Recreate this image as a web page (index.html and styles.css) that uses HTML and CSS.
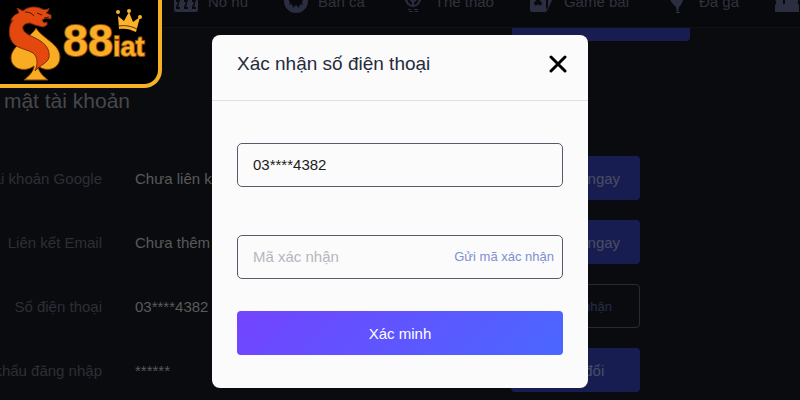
FILE: index.html
```html
<!DOCTYPE html>
<html lang="vi">
<head>
  <meta charset="UTF-8" />
  <meta name="viewport" content="width=device-width, initial-scale=1.0"/>
  <title>Xác nhận số điện thoại</title>
  <link rel="stylesheet" href="styles.css">
</head>
<body>
  <div class="page">
    <nav class="nav">
      <a class="nav-item" href="#">
        <svg class="nav-icon" viewBox="0 0 24 24"><path fill-rule="evenodd" d="M0 0h24v21a2 2 0 0 1-2 2H2a2 2 0 0 1-2-2zM2 11h4l-2 7h2v2H2v-2l2-5H2zM10 11h4l-2 7h2v2h-4v-2l2-5h-2zM18 11h4l-2 7h2v2h-4v-2l2-5h-2z"/></svg>
        <span>Nổ hũ</span>
      </a>
      <a class="nav-item" href="#">
        <svg class="nav-icon" viewBox="0 0 24 24"><path fill-rule="evenodd" d="M12 0a12 12 0 1 1 0 24a12 12 0 1 1 0-24zM4 9l2 5-1 2 3-1 1 4 3-3 3 3 1-4 3 1-1-3 2-4z"/></svg>
        <span>Bắn cá</span>
      </a>
      <a class="nav-item" href="#">
        <svg class="nav-icon" viewBox="0 0 24 24"><path d="M4 8c1 5 4 9 8 9s7-4 8-9M7 8l5 5 6-5M12 13v4M7 15l-2-4M17 15l2-4" fill="none" stroke="currentColor" stroke-width="2"/><path d="M7 20h3v1H7zM8 22h4v1H8zM13 20h4v1h-4zM14 22h3v1h-3z"/></svg>
        <span>Thể thao</span>
      </a>
      <a class="nav-item" href="#">
        <svg class="nav-icon" viewBox="0 0 24 24"><path fill-rule="evenodd" d="M0 0h16v21a2 2 0 0 1-2 2H2a2 2 0 0 1-2-2zM8 9l-4 5c0 3 3 3 4 1 1 2 4 2 4-1z"/><path d="M18 2l5 7-6 13-3 2 4-6z"/></svg>
        <span>Game bài</span>
      </a>
      <a class="nav-item" href="#">
        <svg class="nav-icon" viewBox="0 0 24 24"><path d="M4 8h15c-1 5-3 8-5 10l-1 5h2v1h-4v-1h1l-1-5c-3-3-6-6-7-10z"/></svg>
        <span>Đá gà</span>
      </a>
      <a class="nav-item" href="#">
        <svg class="nav-icon" viewBox="0 0 24 24"><path fill-rule="evenodd" d="M0 4h24v7a3 3 0 0 0 0 5v7H0v-7a3 3 0 0 0 0-5zM8 8v7h2V8z"/></svg>
      </a>
    </nav>

    <main class="account">
      <div class="save-row"><button class="btn btn-save" aria-label="Lưu"></button></div>
      <h2 class="section-title"><span>Bảo mật tài khoản</span></h2>
      <div class="row">
        <span class="row-label">Tài khoản Google</span>
        <span class="row-value">Chưa liên kết</span>
        <button class="btn">Liên kết ngay</button>
      </div>
      <div class="row">
        <span class="row-label">Liên kết Email</span>
        <span class="row-value">Chưa thêm</span>
        <button class="btn">Liên kết ngay</button>
      </div>
      <div class="row">
        <span class="row-label">Số điện thoại</span>
        <span class="row-value">03****4382</span>
        <button class="btn btn-outline">Đã xác nhận</button>
      </div>
      <div class="row">
        <span class="row-label">Mật khẩu đăng nhập</span>
        <span class="row-value">******</span>
        <button class="btn">Thay đổi</button>
      </div>
    </main>
  </div>

  <a class="logo" href="#">
    <svg class="logo-mark" viewBox="0 0 54 78">
      <path class="spade" d="M28 23C23 33 3 40 3 53c0 11 14 15 23 8 0 5-5 10-10 14h24c-5-4-10-9-10-14 9 7 22 3 22-9 0-13-17-18-24-29z"/>
      <path class="dragon" d="M27 66c3-7 3-14-2-18-6-4-15-4-20-10C0 32 0 21 5 15l-2 1c1-5 5-7 8-8l-2-5 6 3c5-5 14-5 19-2 3 1 5 1 7-1 0 3-2 4-3 5l5 2 0 4-5-1-4 2 2 3 3-1 0 3-4 2-8-2-5-2c-5 0-8 3-7 6 1 5 9 7 14 10 8 4 13 10 12 18-1 6-9 8-14 14z"/>
      <path class="eye" d="M29 8l5 2M17 7c4 0 7 1 9 4M36 13l5-1"/>
    </svg>
    <svg class="logo-crown" viewBox="0 0 27 26">
      <path d="M4 21L3 8l6 5 5-9 4 10 7-5-4 15c-6-3-11-4-17-3z"/>
      <circle cx="3" cy="4" r="2"/><circle cx="14" cy="3" r="2"/><circle cx="25" cy="9" r="2"/>
      <path class="crown-line" d="M4 18c6-1 12 0 18 3"/>
    </svg>
    <span class="logo-text">88<small>iat</small></span>
  </a>

  <div class="overlay">
    <form class="modal">
      <header class="modal-header">
        <h1 class="modal-title">Xác nhận số điện thoại</h1>
        <button class="modal-close" type="button" aria-label="Đóng">
          <svg viewBox="0 0 18 18"><path d="M2 2l14 14M16 2L2 16"/></svg>
        </button>
      </header>
      <div class="modal-body">
        <div class="field">
          <input class="field-input" type="text" value="03****4382" aria-label="Số điện thoại">
        </div>
        <div class="field">
          <input class="field-input" type="text" placeholder="Mã xác nhận" aria-label="Mã xác nhận">
          <button class="send-code" type="button">Gửi mã xác nhận</button>
        </div>
        <button class="submit" type="submit">Xác minh</button>
      </div>
    </form>
  </div>
</body>
</html>
```
FILE: styles.css
```css
* {
  margin: 0;
  padding: 0;
  box-sizing: border-box;
}

body {
  font-family: "Liberation Sans", Arial, sans-serif;
  font-size: 15px;
  background-color: #0a0b0f;
  color: #555;
  overflow: hidden;
}

button,
input {
  font-family: inherit;
  font-size: 15px;
}

.page {
  height: 100vh;
  overflow: hidden;
}

/* top menu */
.nav {
  display: flex;
  align-items: flex-end;
  gap: 36px;
  height: 28px;
  padding: 0 0 14px 174px;
  border-bottom: 1px solid #101115;
  background-color: #08090c;
  white-space: nowrap;
}

.nav-item {
  display: flex;
  flex: none;
  align-items: center;
  gap: 10px;
  color: #30323e;
  text-decoration: none;
}

.nav-icon {
  width: 24px;
  height: 24px;
  fill: #2a2e40;
  color: #2a2e40;
}

/* account settings */
.save-row {
  padding-left: 512px;
}

.section-title {
  display: flex;
  justify-content: flex-end;
  width: 130px;
  padding-top: 48px;
  margin-bottom: 33px;
  font-size: 21px;
  line-height: 24px;
  font-weight: 400;
  color: #47484b;
  white-space: nowrap;
}

.row {
  display: grid;
  grid-template-columns: 102px 343px 129px;
  column-gap: 33px;
  align-items: center;
  height: 64px;
  white-space: nowrap;
}

.row-label {
  display: flex;
  justify-content: flex-end;
  color: #2d2f36;
}

.row-value {
  color: #5a5a59;
}

.btn {
  height: 44px;
  border: none;
  border-radius: 4px;
  background-color: #171d50;
  color: #4a4d66;
}

.btn-save {
  display: block;
  width: 178px;
  height: 13px;
  border-radius: 0 0 4px 4px;
}

.btn-outline {
  border: 1px solid #282c32;
  background-color: transparent;
  color: #282d4a;
  font-size: 13px;
}

/* logo badge */
.logo {
  position: absolute;
  top: 0;
  left: 0;
  width: 162px;
  height: 88px;
  border: solid #f4b224;
  border-width: 0 4px 4px 0;
  border-bottom-right-radius: 18px;
  background-color: #000;
  text-decoration: none;
}

.logo-mark {
  position: absolute;
  top: 5px;
  left: 8px;
  width: 54px;
  height: 78px;
}

.spade {
  fill: #f9ab22;
  stroke: #7a3c0c;
  stroke-width: 1;
}

.dragon {
  fill: #e3490f;
  stroke: #7a2c0c;
  stroke-width: 1;
}

.eye {
  fill: none;
  stroke: #4a1606;
  stroke-width: 1;
}

.logo-crown {
  position: absolute;
  top: 8px;
  left: 115px;
  width: 27px;
  height: 26px;
  fill: #fcb32a;
}

.crown-line {
  fill: none;
  stroke: #5c300b;
}

.logo-text {
  position: absolute;
  top: 15px;
  left: 63px;
  font-size: 45px;
  font-weight: 700;
  color: #fbad26;
  -webkit-text-stroke: 2px #8a4a10;
  paint-order: stroke fill;
}

.logo-text small {
  font-size: 27px;
}

/* modal */
.overlay {
  position: absolute;
  inset: 0;
  display: flex;
  justify-content: center;
  align-items: flex-start;
  padding-top: 35px;
}

.modal {
  width: 47%;
  min-width: 320px;
  border-radius: 8px;
  background-color: #fbfbfc;
}

.modal-header {
  display: flex;
  justify-content: space-between;
  align-items: center;
  height: 66px;
  padding: 0 21px 8px 25px;
  border-bottom: 1px solid #e0e0e3;
}

.modal-title {
  font-size: 19px;
  font-weight: 400;
  color: #272b3b;
}

.modal-close {
  width: 18px;
  height: 18px;
  border: none;
  background: none;
}

.modal-close svg {
  display: block;
  fill: none;
  stroke: #000;
  stroke-width: 3;
  stroke-linecap: round;
}

.modal-body {
  display: flex;
  flex-direction: column;
  padding: 42px 25px 33px;
}

.field {
  display: flex;
  align-items: center;
  height: 44px;
  margin-bottom: 48px;
  padding: 0 8px 2px 15px;
  border: 1px solid #5b5869;
  border-radius: 5px;
}

.field + .field {
  margin-bottom: 32px;
}

.field-input {
  flex: 1;
  min-width: 0;
  border: none;
  outline: none;
  background: none;
  color: #1c1c22;
}

.field-input::placeholder {
  color: #b5b6be;
}

.send-code {
  border: none;
  background: none;
  color: #7d8fd0;
  font-size: 13px;
}

.submit {
  height: 44px;
  border: none;
  border-radius: 4px;
  background: linear-gradient(135deg, #7344ff, #4a67ff);
  color: #fff;
}
```
